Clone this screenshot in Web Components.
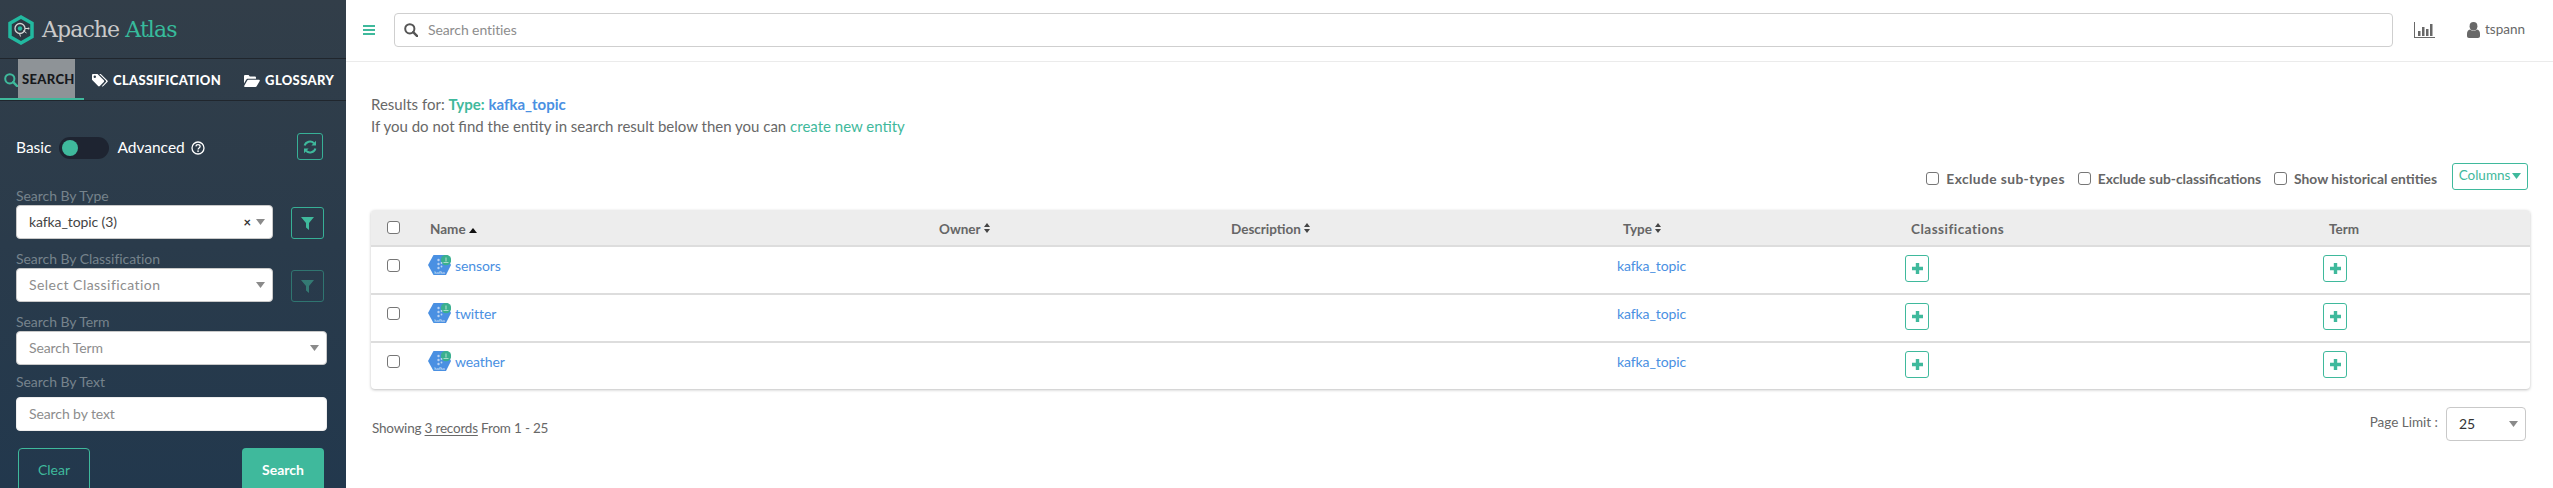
<!DOCTYPE html>
<html>
<head>
<meta charset="utf-8">
<title>Apache Atlas</title>
<style>
  html, body { margin: 0; height: 488px; overflow: hidden; background: #fff; }
  body { display: flex; font-family: Lato, "Noto Sans", sans-serif; }
</style>
</head>
<body>
<atlas-sidebar></atlas-sidebar>
<atlas-main></atlas-main>
<script>
const FONT = 'Lato, "Noto Sans", sans-serif';
const icons = {
  search: '<svg width="14" height="14" viewBox="0 0 14 14" fill="none" stroke="currentColor" stroke-width="2"><circle cx="5.8" cy="5.8" r="4.6"/><path d="M9.2 9.2l4 4" stroke-linecap="round" stroke-width="2.4"/></svg>',
  tags: '<svg width="16" height="13" viewBox="0 0 16 13" fill="currentColor"><path d="M0 1.2C0 .5.5 0 1.2 0h4.3l6.3 6.3c.5.5.5 1.2 0 1.7l-4 4c-.5.5-1.2.5-1.7 0L0 5.8zM2.8 1.6a1.2 1.2 0 1 0 0 2.4 1.2 1.2 0 0 0 0-2.4z" fill-rule="evenodd"/><path d="M7.2 0h1.6l6.6 6.4c.5.5.5 1.2 0 1.7l-4 4c-.5.5-1.1.5-1.6.1l4-4.1c.5-.5.5-1.2 0-1.7z"/></svg>',
  folder: '<svg width="16" height="12" viewBox="0 0 16 12" fill="currentColor"><path d="M0 1.2C0 .5.5 0 1.2 0h3.4l1.2 1.5h5c.7 0 1.2.5 1.2 1.2v1H4.2C3.2 3.7 2.5 4.2 2 5L0 8.6z"/><path d="M4.4 4.8H15c.7 0 1.1.7.7 1.3l-2.9 5c-.3.6-.8.9-1.4.9H.9c-.6 0-1-.7-.6-1.2l2.8-5.1c.3-.6.7-.9 1.3-.9z"/></svg>',
  refresh: '<svg width="14" height="14" viewBox="0 0 14 14" fill="none" stroke="currentColor" stroke-width="2"><path d="M1.6 5.6A5.6 5.6 0 0 1 11 3.2"/><path d="M12.4 8.4A5.6 5.6 0 0 1 3 10.8"/><path d="M13 .8v4.6H8.4z" fill="currentColor" stroke="none"/><path d="M1 13.2V8.6h4.6z" fill="currentColor" stroke="none"/></svg>',
  filter: '<svg width="13" height="13" viewBox="0 0 13 13" fill="currentColor"><path d="M0 0h13L8 6v7L5 10.5V6z"/></svg>',
  help: '<svg width="14" height="14" viewBox="0 0 14 14"><circle cx="7" cy="7" r="6" fill="none" stroke="currentColor" stroke-width="1.3"/><path d="M4.9 5.4C5 4.2 5.9 3.6 7 3.6c1.2 0 2.1.7 2.1 1.8 0 1.5-2 1.5-2 3" fill="none" stroke="currentColor" stroke-width="1.3"/><rect x="6.3" y="9.4" width="1.5" height="1.5" fill="currentColor"/></svg>',
  bars: '<svg width="21" height="16" viewBox="0 0 21 16" fill="currentColor"><path d="M0 0h1v15h20v1H0z"/><rect x="4" y="9" width="2.5" height="5"/><rect x="8" y="5" width="2.5" height="9"/><rect x="12" y="7" width="2.5" height="7"/><rect x="16" y="2" width="2.5" height="12"/></svg>',
  user: '<svg width="13" height="16" viewBox="0 0 13 16" fill="currentColor"><ellipse cx="6.5" cy="4.2" rx="3.9" ry="4.2"/><path d="M3 7.5c1 .9 2.2 1.3 3.5 1.3s2.500-.4 3.500-1.300c2 .3 3 2 3 4.500v2c0 1.200-.8 2-2 2H2c-1.200 0-2-.8-2-2v-2c0-2.500 1-4.200 3-4.500z"/></svg>',
  plus: '<svg width="11" height="11" viewBox="0 0 11 11" fill="currentColor"><path d="M3.800 0h3.400v3.800H11v3.400H7.200V11H3.800V7.200H0V3.800h3.800z"/></svg>',
  caret: '<svg width="9" height="6" viewBox="0 0 9 6" fill="currentColor"><path d="M0 0h9L4.500 6z"/></svg>',
  sortUp: '<svg width="8" height="5" viewBox="0 0 8 5" fill="currentColor"><path d="M4 0l4 5H0z"/></svg>',
  sortBoth: '<svg width="6" height="10" viewBox="0 0 6 10" fill="currentColor"><path d="M3 0l3 4H0zM3 10L0 6h6z"/></svg>'
};

class AtlasLogo extends HTMLElement {
  connectedCallback() {
    this.attachShadow({ mode: 'open' });
    this.shadowRoot.innerHTML = `
      <style>
        :host { display: flex; align-items: center; height: 59px; padding-left: 8px; box-sizing: border-box; border-bottom: 1px solid #20262d; }
        span { font: 22px/1 "DejaVu Serif", serif; color: #c9c9c9; margin-left: 8px; letter-spacing: -.9px; position: relative; top: 1px; white-space: nowrap; }
        b { font-weight: normal; color: #37bb9b; }
        svg { display: block; margin-top: 2px; }
      </style>
      <svg width="26" height="30" viewBox="0 0 26 30">
        <path d="M13 2L24 8.2v13.600L13 28 2 21.800V8.200z" fill="#2c3843" stroke="#22b9a0" stroke-width="3.500"/>
        <circle cx="12" cy="13.500" r="5" fill="none" stroke="#d5d5d5" stroke-width="1.300"/>
        <circle cx="12" cy="13.500" r="2.200" fill="#22b9a0"/>
        <path d="M15 15.500l3.500 2.500M17 13.500h3M11.500 18.500l1 3" stroke="#d5d5d5" stroke-width="1"/>
        <circle cx="20.500" cy="13.500" r="1" fill="#d5d5d5"/>
      </svg>
      <span>Apache <b>Atlas</b></span>
    `;
  }
}

class AtlasTabs extends HTMLElement {
  connectedCallback() {
    this.attachShadow({ mode: 'open' });
    this.shadowRoot.innerHTML = `
      <style>
        :host { display: flex; height: 42px; box-sizing: border-box; border-bottom: 1px solid #20262d; color: #fff;
                font: 900 13px/1 ${FONT}; letter-spacing: .35px; }
        div { display: flex; flex: none; align-items: center; height: 41px; padding-top: 2px; box-sizing: border-box; white-space: nowrap; }
        .active { width: 84px; padding: 0 0 0 4px; border-bottom: 2px solid #3fb99c; }
        .active svg { color: #3fb99c; flex: none; margin-top: 2px; }
        .active span { display: flex; align-items: center; height: 39px; padding: 2px 0 0 4px; width: 57px; box-sizing: border-box; background: #8e9397; color: #17191c; }
        .tab { margin-left: 8px; gap: 5px; }
        .tab + .tab { margin-left: 23px; }
      </style>
      <div class="active">${icons.search}<span>SEARCH</span></div>
      <div class="tab">${icons.tags}<span>CLASSIFICATION</span></div>
      <div class="tab">${icons.folder}<span>GLOSSARY</span></div>
    `;
  }
}

class AtlasIconButton extends HTMLElement {
  connectedCallback() {
    const icon = this.getAttribute('icon');
    this.attachShadow({ mode: 'open' });
    this.shadowRoot.innerHTML = `
      <style>
        :host { display: flex; align-items: center; justify-content: center; box-sizing: border-box; width: 33px; height: 32px;
                border: 1px solid #37b096; border-radius: 3px; color: #3fb99c; }
        :host([dim]) { opacity: .5; }
        :host([small]) { width: 26px; height: 27px; margin-right: 1px; }
      </style>
      ${icons[icon]}
    `;
  }
}

class AtlasSelect extends HTMLElement {
  connectedCallback() {
    const clear = this.hasAttribute('clear') ? '<i>×</i>' : '';
    const caret = this.hasAttribute('no-caret') ? '' : `<em>${icons.caret}</em>`;
    this.attachShadow({ mode: 'open' });
    this.shadowRoot.innerHTML = `
      <style>
        :host { display: flex; align-items: center; box-sizing: border-box; height: 34px; background: #fff; border-radius: 4px;
                border: 1px solid #c9c9c9; padding: 0 7px 0 12px; font: 14px/1 ${FONT}; color: #8d8d8d; letter-spacing: -.1px; }
        :host([value]) { color: #444; }
        :host([flat]) { border-color: #eee; }
        span { flex: 1; white-space: nowrap; }
        i { font: bold 13px/1 ${FONT}; color: #333; margin-right: 5px; }
        em { display: flex; color: #8a8a8a; width: 9px; }
      </style>
      <span><slot></slot></span>${clear}${caret}
    `;
  }
}

class AtlasField extends HTMLElement {
  connectedCallback() {
    this.attachShadow({ mode: 'open' });
    this.shadowRoot.innerHTML = `
      <style>
        :host { display: block; margin-top: 11px; }
        label { display: block; height: 18px; font: 14px/18px ${FONT}; color: #76838c; letter-spacing: -.05px; white-space: nowrap; }
        .row { display: flex; justify-content: space-between; align-items: flex-end; }
        ::slotted(atlas-select) { flex: 1; }
      </style>
      <label>${this.getAttribute('label')}</label>
      <div class="row"><slot></slot></div>
    `;
  }
}

class AtlasSidebar extends HTMLElement {
  connectedCallback() {
    this.attachShadow({ mode: 'open' });
    this.shadowRoot.innerHTML = `
      <style>
        :host { display: block; flex: none; width: 346px; height: 488px; overflow: hidden; box-sizing: border-box;
                background: linear-gradient(#323e49, #22384d); color: #fff; }
        form { display: block; padding: 32px 22px 0 16px; }
        .mode { display: flex; align-items: center; height: 27px; font: 15.500px/1 ${FONT}; }
        .mode > span { padding-top: 2px; }
        .toggle { width: 50px; height: 22px; margin: 3px 8px 0; border-radius: 11px; background: #1e2431; display: flex; align-items: center; padding-left: 3px; box-sizing: border-box; }
        .toggle::before { content: ""; width: 16px; height: 16px; border-radius: 50%; background: #3fb99c; }
        .help { display: flex; margin-left: 6px; }
        .spacer { flex: 1; }
        .sel { width: 257px; flex: none !important; }
        .full { margin-right: -3px; }
        .actions { display: flex; justify-content: space-between; margin-top: 17px; padding-left: 2px; }
        .btn { display: flex; align-items: center; justify-content: center; box-sizing: border-box; height: 44px; border-radius: 4px; font: 14px/1 ${FONT}; }
        .clear { width: 72px; border: 1px solid #3fb99c; color: #3fb99c; }
        .go { width: 82px; background: #3fb99c; color: #fff; font-weight: 700; }
      </style>
      <atlas-logo></atlas-logo>
      <atlas-tabs></atlas-tabs>
      <form>
        <div class="mode">
          <span>Basic</span><div class="toggle"></div><span>Advanced</span><span class="help">${icons.help}</span>
          <span class="spacer"></span>
          <atlas-icon-button icon="refresh" small></atlas-icon-button>
        </div>
        <atlas-field label="Search By Type" style="margin-top:27px">
          <atlas-select class="sel" value clear>kafka_topic (3)</atlas-select>
          <atlas-icon-button icon="filter"></atlas-icon-button>
        </atlas-field>
        <atlas-field label="Search By Classification">
          <atlas-select class="sel" style="letter-spacing:.45px">Select Classification</atlas-select>
          <atlas-icon-button icon="filter" dim></atlas-icon-button>
        </atlas-field>
        <atlas-field label="Search By Term" class="full">
          <atlas-select>Search Term</atlas-select>
        </atlas-field>
        <atlas-field label="Search By Text" class="full" style="margin-top:8px">
          <atlas-select no-caret flat style="margin-top:6px">Search by text</atlas-select>
        </atlas-field>
        <div class="actions">
          <div class="btn clear">Clear</div>
          <div class="btn go">Search</div>
        </div>
      </form>
    `;
  }
}

class AtlasTopbar extends HTMLElement {
  connectedCallback() {
    this.attachShadow({ mode: 'open' });
    this.shadowRoot.innerHTML = `
      <style>
        :host { display: flex; align-items: center; height: 62px; box-sizing: border-box; padding: 0 28px 2px 17px; border-bottom: 1px solid #ebebeb; color: #686868; font: 14px/1 ${FONT}; }
        .burger { width: 12px; height: 10px; flex: none; margin-right: 19px; border-top: 2px solid #3fb99c; border-bottom: 2px solid #3fb99c; box-sizing: border-box; position: relative; }
        .burger::after { content: ""; position: absolute; left: 0; right: 0; top: 2px; height: 2px; background: #3fb99c; }
        .search { flex: 1; display: flex; align-items: center; height: 34px; box-sizing: border-box; border: 1px solid #cfcfcf; border-radius: 4px; padding-left: 9px; color: #555; }
        .search span { margin-left: 10px; color: #8d8d8d; letter-spacing: -.1px; }
        .chart { margin-left: 21px; display: flex; }
        .user { margin-left: 32px; display: flex; align-items: center; gap: 5px; }
        .user span { width: 40px; font-size: 13.500px; white-space: nowrap; }
      </style>
      <div class="burger"></div>
      <div class="search">${icons.search}<span>Search entities</span></div>
      <div class="chart">${icons.bars}</div>
      <div class="user">${icons.user}<span>tspann</span></div>
    `;
  }
}

const GRID = '57px 505px 292px 392px 288px 418px 1fr';

class TableHead extends HTMLElement {
  connectedCallback() {
    const sort = name => `<span>${name} ${icons.sortBoth}</span>`;
    this.attachShadow({ mode: 'open' });
    this.shadowRoot.innerHTML = `
      <style>
        :host { display: grid; grid-template-columns: ${GRID}; align-items: center; height: 37px; box-sizing: border-box;
                background: #ededed; border-bottom: 2px solid #ddd; font: 700 13.500px/1 ${FONT}; color: #666; border-radius: 4px 4px 0 0; }
        span { padding: 4px 0 0 6px; white-space: nowrap; }
        span svg { vertical-align: 1px; color: #444; }
        .name { padding-left: 2px; }
        .name svg { color: #111; }
        .wide { letter-spacing: .5px; }
        .cb { padding-left: 16px; }
      </style>
      <div class="cb"><atlas-checkbox></atlas-checkbox></div>
      <span class="name">Name ${icons.sortUp}</span>
      ${sort('Owner')}${sort('Description')}${sort('Type')}
      <span class="wide">Classifications</span><span>Term</span>
    `;
  }
}

class AtlasCheckbox extends HTMLElement {
  connectedCallback() {
    this.attachShadow({ mode: 'open' });
    this.shadowRoot.innerHTML = `
      <style>
        :host { display: block; flex: none; width: 13px; height: 13px; box-sizing: border-box; border: 1px solid #767676; border-radius: 3px; background: #fff; }
      </style>
    `;
  }
}

class KafkaIcon extends HTMLElement {
  connectedCallback() {
    this.attachShadow({ mode: 'open' });
    this.shadowRoot.innerHTML = `
      <style>:host { display: block; width: 23px; height: 20px; } svg { display: block; }</style>
      <svg width="23" height="20" viewBox="0 0 23 20">
        <path d="M5.500 0H18l5 10-5 10H5.500L0 10z" fill="#4a90e2"/>
        <circle cx="18" cy="5" r="5.200" fill="#3ab08f"/>
        <path d="M18 2.500v4M15.500 7.500h5" stroke="#a8dcc9" stroke-width="1.100"/>
        <g fill="#b9d3f3"><circle cx="10.500" cy="5" r="1.200"/><circle cx="10.500" cy="9" r="1.200"/><circle cx="10.500" cy="13" r="1.200"/><circle cx="13.500" cy="8" r=".9"/><circle cx="13.500" cy="11.500" r=".9"/></g>
        <text x="11.500" y="18.500" font-size="4.500" fill="#dbe8f8" text-anchor="middle" font-family="Lato, sans-serif">kafka</text>
      </svg>
    `;
  }
}

class TableRow extends HTMLElement {
  connectedCallback() {
    this.attachShadow({ mode: 'open' });
    this.shadowRoot.innerHTML = `
      <style>
        :host { display: grid; grid-template-columns: ${GRID}; height: 48px; box-sizing: border-box; padding-top: 8px; border-bottom: 2px solid #ddd; font: 14px/1 ${FONT}; color: #4a90e2; }
        :host(:last-child) { border-bottom: 0; height: 46px; }
        .cb { padding: 4px 0 0 16px; }
        .name { display: flex; gap: 4px; align-items: flex-start; }
        .name span { padding-top: 4px; letter-spacing: -.1px; }
        .type { padding-top: 4px; letter-spacing: -.1px; }
        .add { display: flex; align-items: center; justify-content: center; box-sizing: border-box; width: 24px; height: 27px; border: 1px solid #3fb99c; border-radius: 3px; color: #3fb99c; }
      </style>
      <div class="cb"><atlas-checkbox></atlas-checkbox></div>
      <div class="name"><kafka-icon></kafka-icon><span>${this.getAttribute('name')}</span></div>
      <div></div><div></div>
      <div class="type">kafka_topic</div>
      <div><div class="add">${icons.plus}</div></div>
      <div><div class="add">${icons.plus}</div></div>
    `;
  }
}

class ResultsTable extends HTMLElement {
  connectedCallback() {
    this.attachShadow({ mode: 'open' });
    this.shadowRoot.innerHTML = `
      <style>
        :host { display: block; border-radius: 4px; box-shadow: 0 1px 3px rgba(0,0,0,.25); }
      </style>
      <table-head></table-head>
      <slot></slot>
    `;
  }
}

class AtlasMain extends HTMLElement {
  connectedCallback() {
    this.attachShadow({ mode: 'open' });
    this.shadowRoot.innerHTML = `
      <style>
        :host { display: block; flex: 1; min-width: 0; color: #686868; font: 15px/22px ${FONT}; }
        .content { padding: 31px 23px 0 25px; }
        .intro b.t { color: #3fb99c; }
        .intro b.k { color: #4a90e2; }
        .intro a { color: #3fb99c; }
        .opts { display: flex; justify-content: flex-end; align-items: center; height: 27px; margin: 26px 2px 20px 0; font: 700 13.800px/1 ${FONT}; color: #666; }
        .opts label { display: flex; align-items: center; gap: 7px; margin-right: 13px; white-space: nowrap; position: relative; top: 2px; }
        .opts label:first-child { letter-spacing: .4px; }
        .cols { display: flex; align-items: center; justify-content: center; gap: 2px; box-sizing: border-box; width: 76px; height: 27px; padding-bottom: 2px; border: 1px solid #3fb99c; border-radius: 3px; color: #3fb99c; font: 13.500px/1 ${FONT}; margin-left: 2px; }
        .foot { display: flex; justify-content: space-between; margin: 18px 4px 0 1px; font-size: 13.500px; }
        .foot u { text-underline-offset: 2px; }
        .show { padding-top: 10px; letter-spacing: -.2px; }
        .limit { display: flex; align-items: center; gap: 8px; }
        .limit span { padding-bottom: 4px; }
        .limit atlas-select { width: 80px; color: #333; }
      </style>
      <atlas-topbar></atlas-topbar>
      <div class="content">
        <div class="intro">
          <div>Results for: <b class="t">Type:</b> <b class="k">kafka_topic</b></div>
          <div>If you do not find the entity in search result below then you can <a>create new entity</a></div>
        </div>
        <div class="opts">
          <label><atlas-checkbox></atlas-checkbox>Exclude sub-types</label>
          <label><atlas-checkbox></atlas-checkbox>Exclude sub-classifications</label>
          <label><atlas-checkbox></atlas-checkbox>Show historical entities</label>
          <div class="cols">Columns ${icons.caret}</div>
        </div>
        <results-table>
          <table-row name="sensors"></table-row>
          <table-row name="twitter"></table-row>
          <table-row name="weather"></table-row>
        </results-table>
        <div class="foot">
          <div class="show">Showing <u>3 records</u> From 1 - 25</div>
          <div class="limit"><span>Page Limit :</span><atlas-select value>25</atlas-select></div>
        </div>
      </div>
    `;
  }
}

customElements.define('atlas-logo', AtlasLogo);
customElements.define('atlas-tabs', AtlasTabs);
customElements.define('atlas-icon-button', AtlasIconButton);
customElements.define('atlas-select', AtlasSelect);
customElements.define('atlas-field', AtlasField);
customElements.define('atlas-sidebar', AtlasSidebar);
customElements.define('atlas-topbar', AtlasTopbar);
customElements.define('atlas-checkbox', AtlasCheckbox);
customElements.define('kafka-icon', KafkaIcon);
customElements.define('table-head', TableHead);
customElements.define('table-row', TableRow);
customElements.define('results-table', ResultsTable);
customElements.define('atlas-main', AtlasMain);
</script>
</body>
</html>
